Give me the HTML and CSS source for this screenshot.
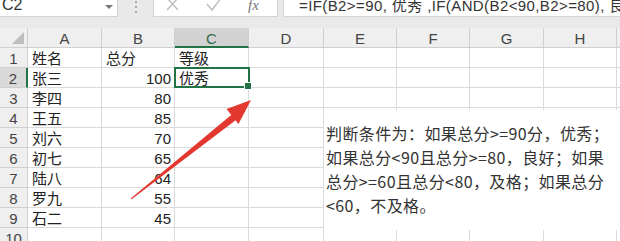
FILE: index.html
```html
<!DOCTYPE html>
<html lang="zh-CN">
<head>
    <meta charset="UTF-8">
    <title>等级判断</title>
    <link rel="stylesheet" href="styles.css">
</head>
<body>

<div class="page">

  <!--编辑栏-->
    <div class="top">
        <div class="namebox">C2<i class="caret"></i></div>
        <div class="dots"><i></i><i></i><i></i></div>
        <div class="fnbox">
            <svg class="ico" width="14" height="12" viewBox="0 0 14 12"><path d="M1 -2 L12 10 M12 -2 L1 10" stroke="#bdbdbd" stroke-width="1.4" fill="none"/></svg>
            <svg class="ico" width="16" height="12" viewBox="0 0 16 12"><path d="M1 4 L6 10 L15 -2" stroke="#bdbdbd" stroke-width="1.4" fill="none"/></svg>
            <span class="fx">fx</span>
        </div>
        <div class="formula">=IF(B2&gt;=90, 优秀 ,IF(AND(B2&lt;90,B2&gt;=80), 良好,IF(AND(B2&lt;80,B2&gt;=60), 及格, 不及格)))</div>
    </div>

  <!--表格-->
    <div class="sheet">
        <div class="h corner"><i></i></div>
        <div class="h">A</div>
        <div class="h">B</div>
        <div class="h now">C</div>
        <div class="h">D</div>
        <div class="h">E</div>
        <div class="h">F</div>
        <div class="h">G</div>
        <div class="h">H</div>
        <div class="h"></div>

        <div class="r">1</div><div class="c">姓名</div><div class="c">总分</div><div class="c">等级</div><div class="c"></div><div class="c"></div><div class="c"></div><div class="c"></div><div class="c"></div><div class="c"></div>
        <div class="r now">2</div><div class="c">张三</div><div class="c n">100</div><div class="c sel">优秀</div><div class="c"></div><div class="c"></div><div class="c"></div><div class="c"></div><div class="c"></div><div class="c"></div>
        <div class="r">3</div><div class="c">李四</div><div class="c n">80</div><div class="c"></div><div class="c"></div><div class="c"></div><div class="c"></div><div class="c"></div><div class="c"></div><div class="c"></div>
        <div class="r">4</div><div class="c">王五</div><div class="c n">85</div><div class="c"></div><div class="c"></div><div class="c"></div><div class="c"></div><div class="c"></div><div class="c"></div><div class="c"></div>
        <div class="r">5</div><div class="c">刘六</div><div class="c n">70</div><div class="c"></div><div class="c"></div><div class="c"></div><div class="c"></div><div class="c"></div><div class="c"></div><div class="c"></div>
        <div class="r">6</div><div class="c">初七</div><div class="c n">65</div><div class="c"></div><div class="c"></div><div class="c"></div><div class="c"></div><div class="c"></div><div class="c"></div><div class="c"></div>
        <div class="r">7</div><div class="c">陆八</div><div class="c n">64</div><div class="c"></div><div class="c"></div><div class="c"></div><div class="c"></div><div class="c"></div><div class="c"></div><div class="c"></div>
        <div class="r">8</div><div class="c">罗九</div><div class="c n">55</div><div class="c"></div><div class="c"></div><div class="c"></div><div class="c"></div><div class="c"></div><div class="c"></div><div class="c"></div>
        <div class="r">9</div><div class="c">石二</div><div class="c n">45</div><div class="c"></div><div class="c"></div><div class="c"></div><div class="c"></div><div class="c"></div><div class="c"></div><div class="c"></div>
        <div class="r">10</div><div class="c"></div><div class="c"></div><div class="c"></div><div class="c"></div><div class="c"></div><div class="c"></div><div class="c"></div><div class="c"></div><div class="c"></div>
    </div>

  <!--文本框-->
    <div class="note">
        判断条件为：如果总分&gt;=90分，优秀；<br>
        如果总分&lt;90且总分&gt;=80，良好；如果<br>
        总分&gt;=60且总分&lt;80，及格；如果总分<br>
        &lt;60，不及格。
    </div>

  <!--红色箭头-->
    <svg class="arrow" width="620" height="241" viewBox="0 0 620 241">
        <polygon points="131.3,199.4 130.7,198.6 232.4,114 236.6,119.5" fill="#e2382f"/>
        <polygon points="251,100 226.5,109 238.5,124" fill="#e2382f"/>
    </svg>
</div>

</body>
</html>
```

FILE: styles.css
```css
* {
margin: 0;
padding: 0;
box-sizing: border-box;
}

body {
background-color: #fff;
font-family: "Liberation Sans", "Noto Sans CJK SC", sans-serif;
overflow: hidden;
}

.page {
width: 620px;
height: 241px;
position: relative;
overflow: hidden;
}

/*编辑栏*/
.top {
height: 28px;
background-color: #e9e9e9;
display: flex;
align-items: flex-start;
}

.namebox {
width: 118px;
height: 17px;
background-color: #fff;
border-right: 1px solid #d4d4d4;
border-bottom: 1px solid #d4d4d4;
font-size: 16px;
line-height: 9px;
color: #333;
padding-left: 2px;
position: relative;
overflow: hidden;
}

.caret {
position: absolute;
left: 105px;
top: 5px;
border-left: 4px solid transparent;
border-right: 4px solid transparent;
border-top: 4px solid #777;
}

.dots {
width: 35px;
height: 17px;
display: flex;
flex-direction: column;
align-items: center;
gap: 3px;
padding-top: 1px;
}

.dots i {
width: 2px;
height: 2px;
background-color: #aaa;
}

.fnbox {
width: 125px;
height: 17px;
background-color: #fff;
border: 1px solid #d4d4d4;
border-top: none;
display: flex;
align-items: flex-start;
gap: 26px;
padding-left: 12px;
}

.fx {
font-family: "Liberation Serif", serif;
font-style: italic;
font-size: 15px;
line-height: 10px;
color: #777;
}

/*公式内容，左边留白*/
.formula {
flex: 1;
height: 17px;
margin-left: 5px;
background-color: #fff;
border-left: 1px solid #d4d4d4;
border-bottom: 1px solid #d4d4d4;
font-size: 15px;
line-height: 12px;
letter-spacing: 0.4px;
color: #333;
white-space: nowrap;
overflow: hidden;
padding-left: 15px;
}

/*表格*/
.sheet {
display: grid;
grid-template-columns: 28px 74px 73px 74px 75px 73px 73px 74px 73px 40px;
grid-auto-rows: 20px;
}

.sheet div {
border-right: 1px solid #dadada;
border-bottom: 1px solid #dadada;
font-size: 15px;
line-height: 21px;
white-space: nowrap;
color: #222;
}

.sheet .h,
.sheet .r {
background-color: #efefef;
text-align: center;
color: #444;
border-color: #cfcfcf;
}

.sheet .h.now {
background-color: #d3d3d3;
color: #356b4a;
border-bottom: 2px solid #217346;
}

.sheet .r.now {
background-color: #d9d9d9;
border-right: 2px solid #217346;
}

.corner {
position: relative;
}

.corner i {
position: absolute;
right: 3px;
bottom: 3px;
border-left: 12px solid transparent;
border-bottom: 12px solid #bdbdbd;
}

.sheet .c {
padding-left: 4px;
}

.sheet .n {
text-align: right;
padding-right: 3px;
}

/*选中单元格*/
.sheet .sel {
position: relative;
}

.sel::after {
content: "";
position: absolute;
left: -1px;
top: -1px;
right: -2px;
bottom: -1px;
border: 2px solid #217346;
}

.sel::before {
content: "";
position: absolute;
right: -4px;
bottom: -3px;
width: 6px;
height: 6px;
background-color: #217346;
border: 1px solid #fff;
z-index: 1;
}

/*文本框*/
.note {
position: absolute;
left: 324px;
top: 110px;
width: 300px;
height: 120px;
background-color: #fff;
padding: 11px 0 0 2px;
font-family: "Noto Sans CJK SC", sans-serif;
font-size: 16px;
line-height: 24px;
letter-spacing: 0.4px;
color: #333;
white-space: nowrap;
}

.arrow {
position: absolute;
left: 0;
top: 0;
}
```
